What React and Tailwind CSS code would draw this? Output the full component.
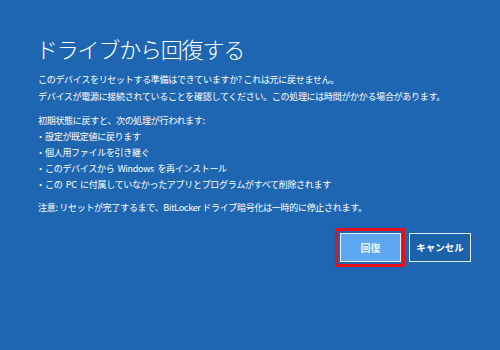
import React from "react";

const items = [
  "設定が既定値に戻ります",
  "個人用ファイルを引き継ぐ",
  "このデバイスから Windows を再インストール",
  "この PC に付属していなかったアプリとプログラムがすべて削除されます",
];

const App = () => {
  return (
    <div
      className="w-[500px] h-[350px] bg-[#1e66b1] text-white pl-[36px] pt-[35px] overflow-hidden"
      style={{ fontFamily: '"Noto Sans CJK JP", "Noto Sans", sans-serif' }}
    >
      <h1 className="text-[22px] leading-[26px] font-light tracking-[-1.2px]">
        ドライブから回復する
      </h1>

      <div className="mt-[10px] pl-[2px] text-[9px] leading-[17px] tracking-[-0.3px]">
        <p>このデバイスをリセットする準備はできていますか? これは元に戻せません。</p>
        <p>デバイスが電源に接続されていることを確認してください。この処理には時間がかかる場合があります。</p>
      </div>

      <div className="mt-[8px] pl-[2px] text-[9px] leading-[16px] tracking-[-0.3px]">
        <p>初期状態に戻すと、次の処理が行われます:</p>
        <ul>
          {items.map((item) => (
            <li key={item} className="flex">
              <span className="w-[7px] -ml-[2px] mr-[2px] text-center">・</span>
              <span className="whitespace-pre">{item.replace(/ /g, "  ")}</span>
            </li>
          ))}
        </ul>
        <p className="mt-[7px]">
          注意: リセットが完了するまで、BitLocker ドライブ暗号化は一時的に停止されます。
        </p>
      </div>

      <div className="mt-[17px] pr-[29px] flex justify-end gap-[8px]">
        <div className="relative">
          <button className="w-[61px] h-[29px] bg-[#5ea8f2] border-[1.5px] border-[#e6f0fb] text-[#eef5ff] text-[10px] font-bold">
            回復
          </button>
          <span className="absolute -top-[5px] -bottom-[5px] -left-[5px] -right-[4px] border-[3.5px] border-[#e8101c] pointer-events-none" />
        </div>
        <button className="w-[62px] h-[29px] bg-[#1c62ab] border-[1.5px] border-[#e6f0fb] text-white text-[9.5px] font-bold">
          キャンセル
        </button>
      </div>
    </div>
  );
};

export default App;
